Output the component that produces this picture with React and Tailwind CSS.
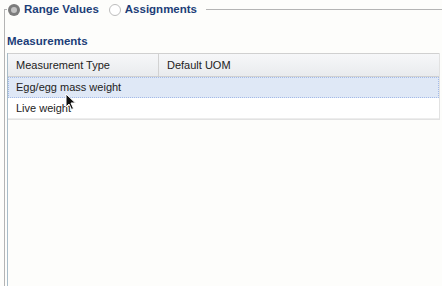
export default function App() {
  return (
    <div className="relative w-[442px] h-[286px] overflow-hidden bg-[#fdfdfb]" style={{ fontFamily: '"Liberation Sans", Arial, sans-serif' }}>
      {/* Fieldset */}
      <div className="absolute left-[4px] top-[9px] right-0 bottom-0 border-l border-t border-[#b4b4b4]" />
      <div className="relative flex flex-col h-full">
        {/* legend radios */}
        <div className="flex items-center h-[19px] pl-[1px] pr-[9px] ml-[7px] bg-[#fdfdfb] w-fit text-[11.5px] font-bold text-[#1c3d78]">
          <span className="w-[12px] h-[12px] rounded-full bg-[#7c7c7c] flex items-center justify-center mr-[4px]">
            <span className="w-[6px] h-[6px] rounded-full bg-[#c4c4c4]" />
          </span>
          <span>Range Values</span>
          <span className="w-[12px] h-[12px] rounded-full bg-white border border-[#bdbdbd] ml-[10px] mr-[4px]" />
          <span>Assignments</span>
        </div>
        {/* inner panel */}
        <div className="flex-1 ml-[7px] mt-[13px] border-l border-[#a8bcc8] flex flex-col">
          <div className="text-[11.5px] font-bold text-[#1c3d78] h-[21px] leading-[18px] -ml-[1px] bg-[#fdfdfb]">
            Measurements
          </div>
          <div className="mr-[2px] bg-white border-r border-b border-[#e2e2e2]">
            <div className="flex h-[24px] border-t border-[#a6bfcf] bg-gradient-to-b from-[#f6f7f9] to-[#e9ebee] text-[11px] text-[#222] border-b border-[#d0d0d0]">
              <div className="w-[151px] pl-[8px] flex items-center border-r border-[#d2d2d2]">Measurement Type</div>
              <div className="flex-1 pl-[8px] flex items-center">Default UOM</div>
            </div>
            <div className="h-[21px] flex items-center pl-[7px] text-[11px] text-[#222] bg-[#dfe8f6] border border-dotted border-[#a3bae9]">
              Egg/egg mass weight
            </div>
            <div className="h-[21px] flex items-center pl-[8px] text-[11px] text-[#222] border-b border-[#ededed]">
              Live weight
            </div>
          </div>
        </div>
      </div>
      {/* mouse cursor */}
      <svg className="absolute left-[65px] top-[93px]" width="12" height="18" viewBox="0 0 12 18">
        <path d="M1 1 L1 14 L4 11 L6.5 16.5 L8.5 15.5 L6 10 L10.5 10 Z" fill="#111" stroke="#fff" strokeWidth="1" />
      </svg>
    </div>
  );
}
